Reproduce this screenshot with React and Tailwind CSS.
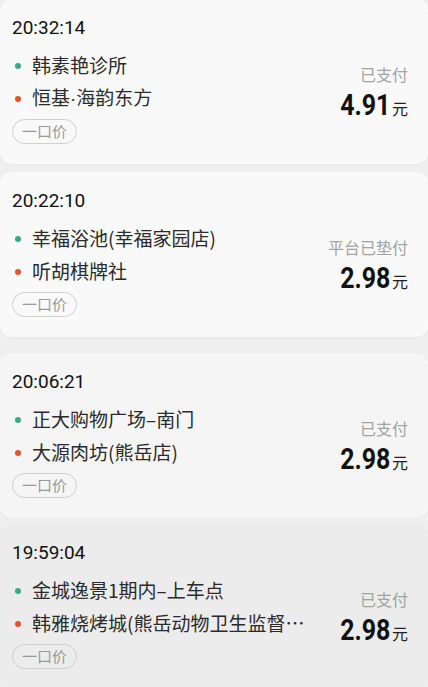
import React from 'react';

const orders = [
  { time: '20:32:14', from: '韩素艳诊所', to: ['恒基', '海韵东方'], status: '已支付', amount: '4.91', bg: 'bg-[#f9f9f9]', mt: '-mt-[1px]' },
  { time: '20:22:10', from: '幸福浴池(幸福家园店)', to: '听胡棋牌社', status: '平台已垫付', amount: '2.98', bg: 'bg-[#f9f9f9]', mt: 'mt-[8px]' },
  { time: '20:06:21', from: '正大购物广场–南门', to: '大源肉坊(熊岳店)', status: '已支付', amount: '2.98', bg: 'bg-[#f5f5f5]', mt: 'mt-[16px]' },
  { time: '19:59:04', from: '金城逸景1期内–上车点', to: '韩雅烧烤城(熊岳动物卫生监督所)', status: '已支付', amount: '2.98', bg: 'bg-[#ececec]', mt: 'mt-[6px]' },
];

const cjk = { fontFamily: '"Noto Sans CJK SC", "Noto Sans", sans-serif' };

function Place({ value }) {
  // middle dot in a latin font so it stays narrow
  if (Array.isArray(value)) {
    return (
      <>
        {value[0]}
        <span style={{ fontFamily: '"Liberation Sans", sans-serif' }}>·</span>
        {value[1]}
      </>
    );
  }
  return value;
}

function OrderCard({ order }) {
  return (
    <div className={`${order.mt} ${order.bg} rounded-[12px] pl-[12px] pr-[20px] pt-[17px] pb-[20px] shadow-[0_1px_3px_rgba(0,0,0,0.03)]`}>
      <div className="text-[19px] leading-[24px] text-[#111]" style={{ fontFamily: 'Roboto, "Liberation Sans", sans-serif' }}>
        {order.time}
      </div>
      <div className="flex mt-[9px]">
        <div className="flex-1 min-w-0" style={cjk}>
          <div className="flex items-center h-[33px]">
            <span className="w-[6px] h-[6px] rounded-full bg-[#3aa984] shrink-0 ml-[3px]"></span>
            <span className="ml-[11px] max-w-[274px] text-[19px] text-[#2b2b2b] truncate">
              <Place value={order.from} />
            </span>
          </div>
          <div className="flex items-center h-[33px]">
            <span className="w-[6px] h-[6px] rounded-full bg-[#e4532e] shrink-0 ml-[3px]"></span>
            <span className="ml-[11px] max-w-[274px] text-[19px] text-[#2b2b2b] truncate">
              <Place value={order.to} />
            </span>
          </div>
          <div className="mt-[4px] flex">
            <span className="h-[25px] w-[65px] flex items-center justify-center rounded-full border border-[#d0d0d0] text-[15px] text-[#9a9a9a]">
              一口价
            </span>
          </div>
        </div>
        <div className="w-[88px] shrink-0 flex flex-col items-end pt-[15px]">
          <div className="text-[16px] leading-[20px] text-[#a3a3a3] whitespace-nowrap" style={cjk}>{order.status}</div>
          <div className="flex items-baseline mt-[4px]">
            <span
              className="inline-block text-[29px] leading-[34px] font-bold text-[#111] scale-x-[0.86] origin-right -mr-[1px]"
              style={{ fontFamily: 'Roboto, "Liberation Sans", sans-serif' }}
            >
              {order.amount}
            </span>
            <span className="ml-[3px] text-[16px] text-[#222]" style={cjk}>元</span>
          </div>
        </div>
      </div>
    </div>
  );
}

export default function App() {
  return (
    <div className="w-[428px] h-[687px] overflow-hidden bg-[#efefef]">
      {orders.map((order) => (
        <OrderCard key={order.time} order={order} />
      ))}
    </div>
  );
}
